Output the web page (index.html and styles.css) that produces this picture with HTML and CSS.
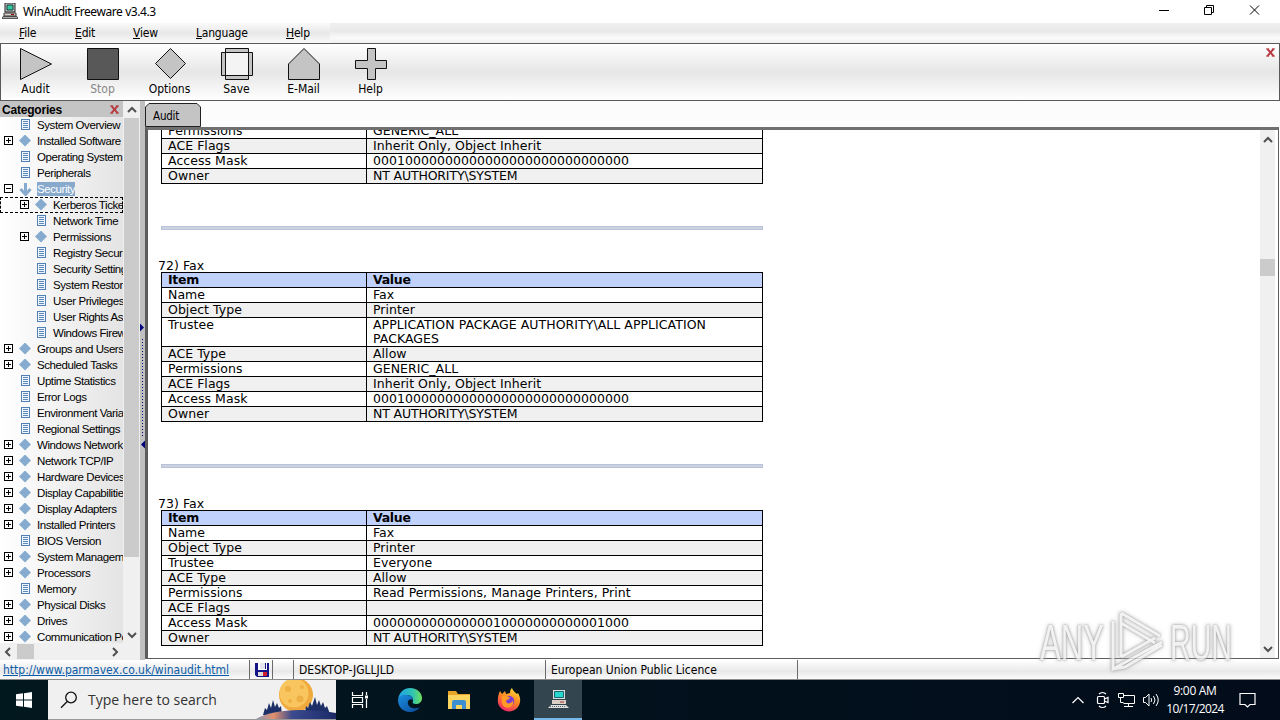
FILE: index.html
```html
<!DOCTYPE html>
<html lang="en">
<head>
  <meta charset="UTF-8" />
  <title>WinAudit Freeware v3.4.3</title>
  <link rel="stylesheet" href="styles.css">
</head>
<body>
  <svg class="defs" width="0" height="0">
    <symbol id="pc" viewBox="0 0 16 16">
      <path d="M3 0h10v9H3z" fill="#c8c8c8" stroke="#222"/>
      <path d="M5 2h6v5H5z" fill="#35c9a0" stroke="#163c3c"/>
      <path d="M2 10h12v3H2z" fill="#d8d0c8" stroke="#333"/>
      <path d="M1 13.5h14l1 2H0z" fill="#aaa" stroke="#222" stroke-width=".7"/>
      <path d="M9 11.5h3" stroke="#900"/>
    </symbol>
    <symbol id="up" viewBox="0 0 10 8"><path d="M1 6 5 2l4 4" fill="none" stroke="#505050" stroke-width="2"/></symbol>
    <symbol id="down" viewBox="0 0 10 8"><path d="M1 2 5 6l4-4" fill="none" stroke="#505050" stroke-width="2"/></symbol>
    <symbol id="left" viewBox="0 0 8 10"><path d="M6 1 2 5l4 4" fill="none" stroke="#505050" stroke-width="2"/></symbol>
    <symbol id="right" viewBox="0 0 8 10"><path d="M2 1l4 4-4 4" fill="none" stroke="#505050" stroke-width="2"/></symbol>
    <symbol id="close" viewBox="0 0 10 10"><path d="M1.5 1 8.500 9M8.500 1 1.500 9" stroke="#b83a40" stroke-width="2.200"/><path d="M0 1h3.500M6.500 1H10M0 9h3.500M6.500 9H10" stroke="#b83a40"/></symbol>
  </svg>

  <header class="titlebar">
    <svg class="app-icon" width="16" height="16"><use href="#pc"/></svg>
    <span class="title">WinAudit Freeware v3.4.3</span>
    <svg class="win-buttons" width="110" height="22" fill="none" stroke="#000">
      <path d="M5 10.500h10"/>
      <path d="M50.500 7.500h7v7h-7zM52.500 7.500v-2h7v7h-2"/>
      <path d="M96 5.500l9 9M105 5.500l-9 9"/>
    </svg>
  </header>

  <nav class="menubar">
    <div class="menus">
      <a class="m-file"><u>F</u>ile</a>
      <a class="m-edit"><u>E</u>dit</a>
      <a class="m-view"><u>V</u>iew</a>
      <a class="m-lang"><u>L</u>anguage</a>
      <a class="m-help"><u>H</u>elp</a>
    </div>
  </nav>

  <section class="toolbar">
    <div class="tool"><svg width="34" height="34"><path d="M1.500 1.500v31l31-15.500z"/></svg><span>Audit</span></div>
    <div class="tool off"><svg width="34" height="34"><path d="M1.500 1.500h31v31h-31z"/></svg><span>Stop</span></div>
    <div class="tool"><svg width="34" height="34"><path d="M17.500 1.500l15 15-15 15-15-15z"/></svg><span>Options</span></div>
    <div class="tool"><svg width="34" height="34"><path d="M1.500 5.500h31v23h-31z"/><path d="M5.500 1.500h23v31h-23z"/><path class="hole" d="M5.500 5.500h23v23h-23z"/></svg><span>Save</span></div>
    <div class="tool"><svg width="34" height="34"><path d="M17 1.500l15.500 15.500v15.500h-31V17z"/></svg><span>E-Mail</span></div>
    <div class="tool"><svg width="34" height="34"><path d="M13.500 1.500h8v12h11v8h-11v11h-8v-11h-12v-8h12z"/></svg><span>Help</span></div>
    <svg class="bar-close" width="9" height="9"><use href="#close"/></svg>
  </section>

  <main class="workspace">
    <aside class="sidebar">
      <div class="side-top">
        <div class="tree-pane">
          <div class="tree-head"><b>Categories</b><svg width="9" height="9"><use href="#close"/></svg></div>
          <ul class="tree">
            <li><i class="no"></i><i class="doc"></i><span>System Overview</span></li>
            <li><i class="plus"></i><i class="dia"></i><span>Installed Software</span></li>
            <li><i class="no"></i><i class="doc"></i><span>Operating System</span></li>
            <li><i class="no"></i><i class="doc"></i><span>Peripherals</span></li>
            <li class="selected"><i class="minus"></i><svg class="arrow" width="13" height="13"><path d="M6.500 0v10M1.500 6l5 5.500 5-5.500"/></svg><span>Security</span></li>
            <li class="sub focus"><i class="plus"></i><i class="dia"></i><span>Kerberos Tickets</span></li>
            <li class="sub"><i class="no"></i><i class="doc"></i><span>Network Time</span></li>
            <li class="sub"><i class="plus"></i><i class="dia"></i><span>Permissions</span></li>
            <li class="sub"><i class="no"></i><i class="doc"></i><span>Registry Security</span></li>
            <li class="sub"><i class="no"></i><i class="doc"></i><span>Security Settings</span></li>
            <li class="sub"><i class="no"></i><i class="doc"></i><span>System Restore</span></li>
            <li class="sub"><i class="no"></i><i class="doc"></i><span>User Privileges</span></li>
            <li class="sub"><i class="no"></i><i class="doc"></i><span>User Rights Assignment</span></li>
            <li class="sub"><i class="no"></i><i class="doc"></i><span>Windows Firewall</span></li>
            <li><i class="plus"></i><i class="dia"></i><span>Groups and Users</span></li>
            <li><i class="plus"></i><i class="dia"></i><span>Scheduled Tasks</span></li>
            <li><i class="no"></i><i class="doc"></i><span>Uptime Statistics</span></li>
            <li><i class="no"></i><i class="doc"></i><span>Error Logs</span></li>
            <li><i class="no"></i><i class="doc"></i><span>Environment Variables</span></li>
            <li><i class="no"></i><i class="doc"></i><span>Regional Settings</span></li>
            <li><i class="plus"></i><i class="dia"></i><span>Windows Network</span></li>
            <li><i class="plus"></i><i class="dia"></i><span>Network TCP/IP</span></li>
            <li><i class="plus"></i><i class="dia"></i><span>Hardware Devices</span></li>
            <li><i class="plus"></i><i class="dia"></i><span>Display Capabilities</span></li>
            <li><i class="plus"></i><i class="dia"></i><span>Display Adapters</span></li>
            <li><i class="plus"></i><i class="dia"></i><span>Installed Printers</span></li>
            <li><i class="no"></i><i class="doc"></i><span>BIOS Version</span></li>
            <li><i class="plus"></i><i class="dia"></i><span>System Management</span></li>
            <li><i class="plus"></i><i class="dia"></i><span>Processors</span></li>
            <li><i class="no"></i><i class="doc"></i><span>Memory</span></li>
            <li><i class="plus"></i><i class="dia"></i><span>Physical Disks</span></li>
            <li><i class="plus"></i><i class="dia"></i><span>Drives</span></li>
            <li><i class="plus"></i><i class="dia"></i><span>Communication Ports</span></li>
          </ul>
        </div>
        <div class="vscroll">
          <svg width="10" height="8"><use href="#up"/></svg>
          <div class="thumb"></div>
          <svg class="end" width="10" height="8"><use href="#down"/></svg>
        </div>
      </div>
      <div class="hscroll">
        <svg width="8" height="10"><use href="#left"/></svg>
        <div class="thumb"></div>
        <svg class="end" width="8" height="10"><use href="#right"/></svg>
      </div>
    </aside>

    <div class="splitter">
      <svg width="5" height="132">
        <path d="M0 3.500v8l4-4zM5 120.500v8l-4-4z" fill="#00007a"/>
        <path d="M2.500 19v98" stroke="#00007a" stroke-dasharray="1 2"/>
      </svg>
    </div>

    <section class="main">
      <div class="tabs">
        <svg width="57" height="26"><path d="M.5 25.500V6L4 2.500h48L55.500 6v19.500z" fill="#c4c4c4" stroke="#222"/></svg>
        <span class="tab-label">Audit</span>
      </div>
      <div class="view">
        <div class="report">
          <table class="first">
            <tr><td>Permissions</td><td>GENERIC_ALL</td></tr>
            <tr class="alt"><td>ACE Flags</td><td>Inherit Only, Object Inherit</td></tr>
            <tr><td>Access Mask</td><td class="bits">00010000000000000000000000000000</td></tr>
            <tr class="alt"><td>Owner</td><td class="account">NT AUTHORITY\SYSTEM</td></tr>
          </table>
          <hr>
          <h4>72) Fax</h4>
          <table>
            <tr><th>Item</th><th>Value</th></tr>
            <tr><td>Name</td><td>Fax</td></tr>
            <tr class="alt"><td>Object Type</td><td>Printer</td></tr>
            <tr><td>Trustee</td><td>APPLICATION PACKAGE AUTHORITY\ALL APPLICATION<br>PACKAGES</td></tr>
            <tr class="alt"><td>ACE Type</td><td>Allow</td></tr>
            <tr><td>Permissions</td><td>GENERIC_ALL</td></tr>
            <tr class="alt"><td>ACE Flags</td><td>Inherit Only, Object Inherit</td></tr>
            <tr><td>Access Mask</td><td class="bits">00010000000000000000000000000000</td></tr>
            <tr class="alt"><td>Owner</td><td class="account">NT AUTHORITY\SYSTEM</td></tr>
          </table>
          <hr>
          <h4>73) Fax</h4>
          <table>
            <tr><th>Item</th><th>Value</th></tr>
            <tr><td>Name</td><td>Fax</td></tr>
            <tr class="alt"><td>Object Type</td><td>Printer</td></tr>
            <tr><td>Trustee</td><td>Everyone</td></tr>
            <tr class="alt"><td>ACE Type</td><td>Allow</td></tr>
            <tr><td>Permissions</td><td>Read Permissions, Manage Printers, Print</td></tr>
            <tr class="alt"><td>ACE Flags</td><td></td></tr>
            <tr><td>Access Mask</td><td class="bits">00000000000000010000000000001000</td></tr>
            <tr class="alt"><td>Owner</td><td class="account">NT AUTHORITY\SYSTEM</td></tr>
          </table>
        </div>
        <div class="vscroll page">
          <svg width="10" height="8"><use href="#up"/></svg>
          <div class="thumb"></div>
          <svg class="end" width="10" height="8"><use href="#down"/></svg>
        </div>
      </div>
    </section>
  </main>

  <footer class="statusbar">
    <div class="cell link"><a>http://www.parmavex.co.uk/winaudit.html</a></div>
    <div class="cell disk">
      <svg width="16" height="14"><path d="M1 0h14v14H3l-2-2z" fill="#14148a"/><path d="M4 0h2v6h6V0h1v7H4z" fill="#fff"/><path d="M6 0h5v6H6z" fill="#e4e4ec"/><path d="M4 9h5v4H4z" fill="#dcdcdc"/><path d="M9 9h4v4H9z" fill="#d02030"/></svg>
    </div>
    <div class="cell blank"></div>
    <div class="cell host">DESKTOP-JGLLJLD</div>
    <div class="cell licence">European Union Public Licence</div>
  </footer>

  <div class="taskbar">
    <div class="start"><svg width="16" height="16" fill="#fff"><path d="M0 2.300 7 1.300V7.600H0zM8 1.200 16 0v7.600H8zM0 8.500h7v6.300L0 13.800zM8 8.500h8V16l-8-1.200z"/></svg></div>
    <div class="search">
      <svg class="glass" width="18" height="18" fill="none" stroke="#111" stroke-width="1.300"><circle cx="11" cy="6.500" r="5.300"/><path d="M7.200 10.500 1 16.700"/></svg>
      <span>Type here to search</span>
      <svg class="moon" width="80" height="39">
        <defs><linearGradient id="hill"><stop offset="0" stop-color="#8794b8"/><stop offset=".22" stop-color="#e0906c"/><stop offset=".45" stop-color="#3c4a90"/><stop offset="1" stop-color="#1b2a66"/></linearGradient></defs>
        <circle cx="40" cy="15" r="17" fill="#efa93c"/>
        <circle cx="38" cy="13" r="14.500" fill="#f9c55e"/>
        <circle cx="32" cy="9" r="3" fill="#eeb045"/><circle cx="44" cy="19" r="3.500" fill="#eeb045"/><circle cx="46" cy="7" r="2" fill="#eeb045"/><circle cx="34" cy="21" r="2" fill="#eeb045"/>
        <path d="M7 35l2-7 2 2 2-7 2 5 2-8 2 7 2-4 2 5 2-2 1 9zM49 33l1-7 2 2 2-6 2 4 3-9 2 8 2-5 2 6 2-4 2 6 2-2 3 8z" fill="#1c2f66"/>
        <path d="M0 39c14-8 40-12 80-6v6z" fill="url(#hill)"/>
      </svg>
    </div>
    <div class="task first-task"><svg width="18" height="18" fill="none" stroke="#fff" stroke-width="1.200"><path d="M1.500 1v3.500h10V1M1.500 17v-3.500h10V17M1.500 6.500h10v5h-10zM15.500 1v3M15.500 8v9"/><path d="M14 4.500h3v3h-3z" fill="#fff" stroke="none"/></svg></div>
    <div class="task">
      <svg width="24" height="24" viewBox="0 0 24 24">
        <defs>
          <linearGradient id="eg" x1="0" x2="1"><stop offset="0" stop-color="#1fa0e8"/><stop offset=".6" stop-color="#2fc3b4"/><stop offset="1" stop-color="#6fe05a"/></linearGradient>
          <linearGradient id="eb" x1="0" x2="1" y2="1"><stop offset="0" stop-color="#1b8fe0"/><stop offset="1" stop-color="#0c4a9c"/></linearGradient>
        </defs>
        <path d="M0 12C1 4 6 0 12 0c8 0 12 6 12 10 0 4-3 6-6 6-3 0-4-1-3-3 1-3-2-6-6-6-4 0-8 2-9 5z" fill="url(#eg)"/>
        <path d="M0 12c1-4 5-6 9-5 4 0 6 3 6 5-3-2-6 1-5 4 1 4 7 6 12 3-3 4-7 5-10 5C5 24 0 19 0 12z" fill="url(#eb)"/>
      </svg>
    </div>
    <div class="task"><svg width="22" height="20"><path d="M0 1h8l2 3h12v14H0z" fill="#e8a427"/><path d="M0 5h22v14H0z" fill="#fcd560"/><path d="M4 19v-7q0-2 2-2h10q2 0 2 2v7h-4v-4H8v4z" fill="#3e8fd0"/></svg></div>
    <div class="task">
      <svg width="24" height="24" viewBox="0 0 24 24">
        <defs><linearGradient id="ff" x1=".8" y1="0" x2=".3" y2="1"><stop offset="0" stop-color="#ffe13b"/><stop offset=".45" stop-color="#ff8a22"/><stop offset="1" stop-color="#f0246a"/></linearGradient></defs>
        <path d="M3 3l2 3 3-3 1 3 4-1c0-3 1-4 2-5 1 3 3 4 5 6l1-1c2 4 2.500 6 2 9-1 6-6 9.500-11 9.500S.800 19 .800 13C.800 9 1.500 6 3 3z" fill="url(#ff)"/>
        <circle cx="12" cy="13" r="5.200" fill="#7a3fd0"/>
        <path d="M5 8c3-1 5 0 7 1 1 0 1 2-1 2.500-3 1-2 3 0 4 2 0 4-1 5-3 1 5-3 8-7 7-4-1-5-5-4-11.500z" fill="#ff9a26"/>
      </svg>
    </div>
    <div class="task active"><svg width="21" height="20" viewBox="0 0 21 20"><path d="M5 1h12v9H5z" fill="#ddd"/><path d="M6.500 2.500h9v6h-9z" fill="#28d8d0" stroke="#17686c"/><path d="M4 11h14v4H4z" fill="#d9cfc4"/><path d="M12 13h4" stroke="#a33"/><path d="M3 16h15l3 3H0z" fill="#ddd"/><path d="M2 17.500h16" stroke="#666" stroke-dasharray="1 1"/></svg></div>
    <div class="tray">
      <svg width="12" height="8" fill="none" stroke="#fff" stroke-width="1.200"><path d="M.5 7 6 1.500 11.500 7"/></svg>
      <svg class="cam" width="14" height="18" fill="none" stroke="#fff" stroke-width="1.200"><rect x="1.500" y="5.500" width="7" height="7" rx="1"/><path d="M8.500 8 12 6.500v5L8.500 10M3 3c2-2 5-2 7 0M3 15c2 2 5 2 7 0"/></svg>
      <svg class="net" width="17" height="16" fill="none" stroke="#fff"><path d="M5.500 3.500h11v8h-11M10.500 11.500v3M6 14.500h9M.5 1.500h5v4h-5zM2.500 5.500v5h3"/></svg>
      <svg class="vol" width="18" height="16" fill="none" stroke="#fff"><path d="M1.500 5.500h2L7 2v12L3.500 10.500h-2zM9 6q1.500 2 0 4M11.500 4q3 4 0 8M14 2q4.500 6 0 12"/></svg>
      <div class="clock"><div>9:00 AM</div><div class="date">10/17/2024</div></div>
      <svg class="note" width="17" height="17" fill="none" stroke="#fff" stroke-width="1.200"><path d="M1 1.500h15v11h-5L8.500 15 6 12.500H1z"/></svg>
    </div>
  </div>

  <svg class="watermark" width="204" height="70">
    <g class="wm-text">
      <text x="4" y="53" textLength="64" lengthAdjust="spacingAndGlyphs">ANY</text>
      <text x="134" y="53" textLength="62" lengthAdjust="spacingAndGlyphs">RUN</text>
    </g>
    <g class="wm-play"><path d="M85 6l39 23M85 6v44M85 16l34 20M77 14v48l49-27M85 50l34-19M77 62l12-2 37-22"/></g>
  </svg>
</body>
</html>
```
FILE: styles.css
```css
* {
  margin: 0;
  padding: 0;
  box-sizing: border-box;
}

body {
  width: 1280px;
  height: 720px;
  overflow: hidden;
  display: flex;
  flex-direction: column;
  background: #fff;
  color: #000;
  font-family: 'DejaVu Sans Condensed', 'Noto Sans', sans-serif;
  font-size: 12px;
  white-space: nowrap;
}

svg {
  display: block;
  flex: none;
}

.defs {
  position: absolute;
}

/* title and menu */
.titlebar {
  height: 23px;
  display: flex;
  padding-left: 2px;
}

.app-icon {
  margin-top: 3px;
}

.title {
  margin-left: 5px;
  font: 12px/24px 'Noto Sans', sans-serif;
  letter-spacing: -0.42px;
}

.win-buttons {
  margin-left: auto;
  margin-right: 16px;
}

.menubar {
  height: 20px;
  background: linear-gradient(#f0f0f0, #e9e9e9 40%, #fafafa 75%, #f0f0f0);
}

.menus {
  width: 330px;
  height: 20px;
  display: flex;
  padding-left: 19px;
  line-height: 20px;
  letter-spacing: -0.2px;
  background: linear-gradient(#fafafa, #e8e8e8 50%, #fafafa);
}

.m-file { width: 56px; }
.m-edit { width: 58px; }
.m-view { width: 63px; }
.m-lang { width: 90px; }

/* toolbar */
.toolbar {
  height: 58px;
  display: flex;
  padding-left: 1px;
  border: 1px solid #5a5a5a;
  background: linear-gradient(#fff, #e6e6e6 50%, #fff);
}

.tool {
  width: 67px;
  display: flex;
  flex-direction: column;
  align-items: center;
  padding-top: 3px;
}

.tool path {
  fill: #c4c4c4;
  stroke: #111;
}

.tool .hole {
  fill: #f4f4f4;
}

.tool span {
  line-height: 14px;
  margin-top: 1px;
}

.off path {
  fill: #585858;
}

.off span {
  color: #888;
}

.bar-close {
  margin: 4px 4px 0 auto;
}

/* category tree */
.workspace {
  height: 559px;
  display: flex;
}

.sidebar {
  width: 140px;
  background: #f0f0f0;
  font-family: 'Liberation Sans', sans-serif;
}

.side-top {
  height: 542px;
  display: flex;
}

.tree-pane {
  width: 123px;
  overflow: hidden;
  background: linear-gradient(90deg, #fff, #e4e4e4);
}

.tree-head {
  height: 16px;
  display: flex;
  align-items: center;
  justify-content: space-between;
  padding: 1px 4px 0 2px;
  background: #c4c4c4;
  font-size: 12px;
  letter-spacing: -0.2px;
}

.tree {
  list-style: none;
}

.tree li {
  height: 16px;
  display: flex;
  align-items: center;
  padding-left: 4px;
  font-size: 11.5px;
  letter-spacing: -0.42px;
}

.tree li.sub {
  padding-left: 20px;
}

.tree li.focus {
  outline: 1px dashed #000;
  outline-offset: -1px;
}

.tree i {
  flex: none;
  margin-bottom: 1px;
}

.tree span {
  line-height: 14px;
}

.tree .no,
.tree .plus,
.tree .minus {
  width: 9px;
  height: 9px;
}

.plus,
.minus {
  border: 1px solid #000;
  background: linear-gradient(#000, #000) center / 5px 1px no-repeat;
}

.plus {
  background: linear-gradient(#000, #000) center / 5px 1px no-repeat, linear-gradient(#000, #000) center / 1px 5px no-repeat;
}

.tree .doc {
  width: 9px;
  height: 11px;
  margin: 0 7px 1px 8px;
  border: 1px solid #4f7fb5;
  background: repeating-linear-gradient(#5c8abd 0 1px, transparent 1px 2px) center / 5px 7px no-repeat, #eef5fc;
}

.tree .dia {
  width: 12px;
  height: 12px;
  margin: 0 6px 1px 6px;
  background: #86abce;
  clip-path: polygon(50% 0, 100% 50%, 50% 100%, 0 50%);
}

.arrow {
  margin: 0 5px 0 6px;
  fill: none;
  stroke: #86abce;
  stroke-width: 3;
}

.selected span {
  background: #86a9cc;
  color: #fff;
}

/* scrollbars */
.vscroll {
  width: 15px;
  margin-left: 1px;
  display: flex;
  flex-direction: column;
  align-items: center;
  padding: 5px 0 4px;
  background: #f0f0f0;
}

.vscroll .thumb {
  width: 15px;
  height: 439px;
  margin-top: 4px;
  background: #cbcbcb;
}

.end {
  margin-top: auto;
}

.hscroll {
  height: 17px;
  display: flex;
  align-items: center;
  padding-left: 4px;
}

.hscroll .thumb {
  width: 17px;
  height: 15px;
  margin-left: 5px;
  background: #cbcbcb;
}

.hscroll .end {
  margin: 0 0 0 77px;
}

.splitter {
  width: 5px;
  padding-top: 219px;
  background: #c0c0c0;
}

/* report */
.main {
  width: 1135px;
}

.tabs {
  height: 26px;
  background: #fcfcfc;
  display: grid;
}

.tabs > * {
  grid-area: 1 / 1;
}

.tab-label {
  line-height: 26px;
  padding: 2px 0 0 8px;
  font-size: 11.5px;
  letter-spacing: -0.2px;
}

.view {
  height: 532px;
  width: 1134px;
  display: flex;
  overflow: hidden;
  border: solid #5c5c5c;
  border-width: 3px 1px 1px 3px;
  border-top-color: #707070;
}

.report {
  flex: 1;
  padding-left: 13px;
  overflow: hidden;
  font: 12.5px/14px 'DejaVu Sans', sans-serif;
  letter-spacing: 0.05px;
}

.report table {
  width: 602px;
  table-layout: fixed;
  border-spacing: 0;
  border: solid #000;
  border-width: 1px 0 0 1px;
}

.report table.first {
  margin-top: -7px;
}

.report td,
.report th {
  height: 15px;
  padding: 0 6px;
  border: solid #000;
  border-width: 0 1px 1px 0;
  text-align: left;
  vertical-align: top;
}

.report td:first-child,
.report th:first-child {
  width: 205px;
}

.report th {
  background: #c0d2fc;
  letter-spacing: -0.3px;
}

.report .account {
  letter-spacing: -0.15px;
}

.alt {
  background: #f0f0f0;
}

.report hr {
  width: 602px;
  height: 4px;
  margin: 42px 0 29px;
  border: 1px solid #b8c4dc;
  background: #ccd2de;
}

.report h4 {
  height: 13px;
  margin-left: -3px;
  font-weight: normal;
}

.page {
  margin-right: 3px;
  padding: 6px 0 5px;
}

.page .thumb {
  height: 17px;
  margin-top: 115px;
}

/* status bar */
.statusbar {
  height: 20px;
  display: flex;
  line-height: 19px;
  border-bottom: 1px solid #8a8a8a;
  background: linear-gradient(#fff, #e9e9e9 60%, #fafafa);
}

.cell {
  border-right: 1px solid #6a6a6a;
  padding-top: 1px;
}

.link {
  width: 250px;
  padding-left: 3px;
}

.link a {
  color: #0a5ca8;
  text-decoration: underline;
}

.disk {
  width: 23px;
  padding: 3px 0 0 4px;
}

.blank {
  width: 21px;
}

.host {
  width: 252px;
  padding-left: 5px;
}

.licence {
  width: 252px;
  padding-left: 5px;
}

/* taskbar */
.taskbar {
  height: 40px;
  display: flex;
  background: linear-gradient(90deg, #02181f, #02101c 60%, #020c1a);
  color: #fff;
}

.start {
  width: 48px;
  display: flex;
  align-items: center;
  justify-content: center;
}

.search {
  width: 288px;
  display: flex;
  align-items: center;
  background: #f0f0f0;
  border-bottom: 1px solid #999;
  color: #333;
  font: 14px 'Open Sans', sans-serif;
}

.glass {
  margin: 0 10px 0 12px;
}

.moon {
  margin-left: auto;
}

.task {
  width: 48px;
  margin-left: 1.5px;
  display: flex;
  align-items: center;
  justify-content: center;
}

.first-task {
  margin-left: 0;
}

.active {
  background: #33464f;
  border-bottom: 2px solid #76b9ed;
}

.tray {
  margin-left: auto;
  display: flex;
  align-items: center;
}

.cam {
  margin-left: 12px;
}

.net {
  margin-left: 8px;
}

.vol {
  margin-left: 7px;
}

.clock {
  width: 68px;
  margin-left: 1px;
  text-align: center;
  font: 12px/18px 'Open Sans', sans-serif;
  letter-spacing: -0.3px;
}

.date {
  letter-spacing: -0.6px;
}

.note {
  margin: 0 24px 0 10px;
}

/* watermark lies over the page corner */
.watermark {
  position: absolute;
  left: 1036px;
  top: 607px;
  filter: drop-shadow(0 0 1px #888) drop-shadow(0 0 2px #bbb);
  opacity: 0.8;
}

.wm-text {
  font: 50px 'Liberation Sans', sans-serif;
  fill: #f0f0f0;
}

.wm-play {
  fill: none;
  stroke: #f0f0f0;
  stroke-width: 3;
}
```
